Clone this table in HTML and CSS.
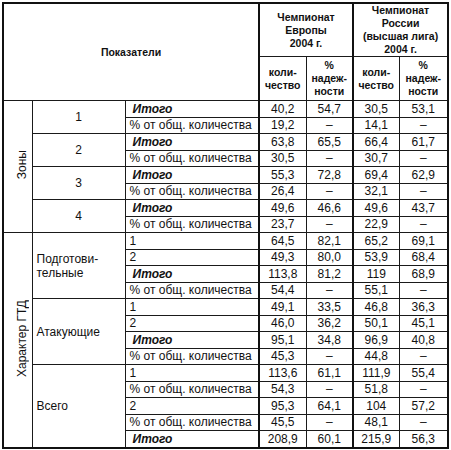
FILE: index.html
```html
<!DOCTYPE html>
<html lang="ru">
<head>
<meta charset="utf-8">
<link rel="stylesheet" href="styles.css">
</head>
<body>
<table class="t">
  <colgroup>
    <col class="c1"><col class="c2"><col class="c3">
    <col class="c4"><col class="c5"><col class="c6"><col class="c7">
  </colgroup>
  <thead>
    <tr class="h1">
      <th colspan="3" rowspan="2" class="hl">Показатели</th>
      <th colspan="2" class="gs">Чемпионат<br>Европы<br>2004 г.</th>
      <th colspan="2" class="gs">Чемпионат<br>России<br>(высшая лига)<br>2004 г.</th>
    </tr>
    <tr class="h2">
      <th class="gs">коли-<br>чество</th>
      <th>%<br>надеж-<br>ности</th>
      <th class="gs">коли-<br>чество</th>
      <th>%<br>надеж-<br>ности</th>
    </tr>
  </thead>
  <tbody>
    <tr><td rowspan="8" class="vert"><span>Зоны</span></td><td rowspan="2" class="ctr">1</td><td class="lbl it">Итого</td><td class="n gs">40,2</td><td class="n">54,7</td><td class="n gs">30,5</td><td class="n">53,1</td></tr>
    <tr><td class="lbl">% от общ. количества</td><td class="n gs">19,2</td><td class="n">–</td><td class="n gs">14,1</td><td class="n">–</td></tr>
    <tr><td rowspan="2" class="ctr">2</td><td class="lbl it">Итого</td><td class="n gs">63,8</td><td class="n">65,5</td><td class="n gs">66,4</td><td class="n">61,7</td></tr>
    <tr><td class="lbl">% от общ. количества</td><td class="n gs">30,5</td><td class="n">–</td><td class="n gs">30,7</td><td class="n">–</td></tr>
    <tr><td rowspan="2" class="ctr">3</td><td class="lbl it">Итого</td><td class="n gs">55,3</td><td class="n">72,8</td><td class="n gs">69,4</td><td class="n">62,9</td></tr>
    <tr><td class="lbl">% от общ. количества</td><td class="n gs">26,4</td><td class="n">–</td><td class="n gs">32,1</td><td class="n">–</td></tr>
    <tr><td rowspan="2" class="ctr">4</td><td class="lbl it">Итого</td><td class="n gs">49,6</td><td class="n">46,6</td><td class="n gs">49,6</td><td class="n">43,7</td></tr>
    <tr><td class="lbl">% от общ. количества</td><td class="n gs">23,7</td><td class="n">–</td><td class="n gs">22,9</td><td class="n">–</td></tr>

    <tr><td rowspan="13" class="vert"><span>Характер ГТД</span></td><td rowspan="4" class="grp">Подготови-<br>тельные</td><td class="lbl">1</td><td class="n gs">64,5</td><td class="n">82,1</td><td class="n gs">65,2</td><td class="n">69,1</td></tr>
    <tr><td class="lbl">2</td><td class="n gs">49,3</td><td class="n">80,0</td><td class="n gs">53,9</td><td class="n">68,4</td></tr>
    <tr><td class="lbl it">Итого</td><td class="n gs">113,8</td><td class="n">81,2</td><td class="n gs">119</td><td class="n">68,9</td></tr>
    <tr><td class="lbl">% от общ. количества</td><td class="n gs">54,4</td><td class="n">–</td><td class="n gs">55,1</td><td class="n">–</td></tr>
    <tr><td rowspan="4" class="grp">Атакующие</td><td class="lbl">1</td><td class="n gs">49,1</td><td class="n">33,5</td><td class="n gs">46,8</td><td class="n">36,3</td></tr>
    <tr><td class="lbl">2</td><td class="n gs">46,0</td><td class="n">36,2</td><td class="n gs">50,1</td><td class="n">45,1</td></tr>
    <tr><td class="lbl it">Итого</td><td class="n gs">95,1</td><td class="n">34,8</td><td class="n gs">96,9</td><td class="n">40,8</td></tr>
    <tr><td class="lbl">% от общ. количества</td><td class="n gs">45,3</td><td class="n">–</td><td class="n gs">44,8</td><td class="n">–</td></tr>
    <tr><td rowspan="5" class="grp">Всего</td><td class="lbl">1</td><td class="n gs">113,6</td><td class="n">61,1</td><td class="n gs">111,9</td><td class="n">55,4</td></tr>
    <tr><td class="lbl">% от общ. количества</td><td class="n gs">54,3</td><td class="n">–</td><td class="n gs">51,8</td><td class="n">–</td></tr>
    <tr><td class="lbl">2</td><td class="n gs">95,3</td><td class="n">64,1</td><td class="n gs">104</td><td class="n">57,2</td></tr>
    <tr><td class="lbl">% от общ. количества</td><td class="n gs">45,5</td><td class="n">–</td><td class="n gs">48,1</td><td class="n">–</td></tr>
    <tr><td class="lbl it">Итого</td><td class="n gs">208,9</td><td class="n">60,1</td><td class="n gs">215,9</td><td class="n">56,3</td></tr>
  </tbody>
</table>
</body>
</html>
```
FILE: styles.css
```css
html, body {
  margin: 0;
  padding: 0;
  background: #fff;
}
body {
  padding: 2px 0 0 2px;
  font-family: "Liberation Sans", Arial, sans-serif;
  color: #111;
}
.t {
  border-collapse: collapse;
  table-layout: fixed;
  width: 447px;
  border: 2px solid #111;
  font-size: 12px;
}
.c1 { width: 29px; }
.c2 { width: 93px; }
.c3 { width: 134px; }
.c4 { width: 47px; }
.c5 { width: 47px; }
.c6 { width: 46px; }
.c7 { width: 49px; }

.t th, .t td {
  border: 1px solid #1a1a1a;
  padding: 0;
  line-height: 14px;
}
.t th {
  font-size: 10.5px;
  font-weight: bold;
  line-height: 13px;
  text-align: center;
  vertical-align: middle;
}
.t .h1 th { height: 51px; }
.t .h2 th { height: 43px; }
.t td { height: 15.5px; }
.t .gs { border-left: 2px solid #111; }

.t .n { text-align: center; }
.t .ctr { text-align: center; vertical-align: middle; }
.t .lbl { padding-left: 4px; white-space: nowrap; }
.t .it { font-weight: bold; font-style: italic; padding-left: 7px; }
.t .grp { padding-left: 4px; vertical-align: middle; }
.t .vert { text-align: center; vertical-align: middle; }
.vert span {
  display: inline-block;
  writing-mode: vertical-rl;
  transform: rotate(180deg);
  white-space: nowrap;
  margin-left: 8px;
}
```
